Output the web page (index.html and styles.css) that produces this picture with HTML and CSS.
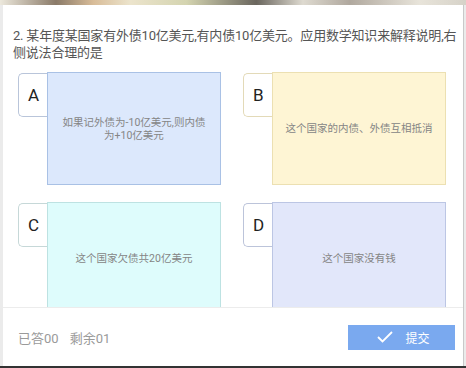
FILE: index.html
```html
<!DOCTYPE html>
<html lang="zh">
<head>
  <meta charset="UTF-8" />
  <meta name="viewport" content="width=device-width, initial-scale=1.0"/>
  <title>答题</title>
  <link rel="stylesheet" href="styles.css">
</head>
<body>
  <div class="screen">
    <div class="photo"></div>

    <div class="panel">
      <div class="content">
        <p class="question">2. 某年度某国家有外债10亿美元,有内债10亿美元。应用数学知识来解释说明,右侧说法合理的是</p>

        <div class="options">
          <div class="option opt-a">
            <div class="letter">A</div>
            <div class="answer">如果记外债为-10亿美元,则内债为+10亿美元</div>
          </div>
          <div class="option opt-b">
            <div class="letter">B</div>
            <div class="answer">这个国家的内债、外债互相抵消</div>
          </div>
          <div class="option opt-c">
            <div class="letter">C</div>
            <div class="answer">这个国家欠债共20亿美元</div>
          </div>
          <div class="option opt-d">
            <div class="letter">D</div>
            <div class="answer">这个国家没有钱</div>
          </div>
        </div>
      </div>

      <div class="footer">
        <div class="stats">
          <span>已答00</span>
          <span>剩余01</span>
        </div>
        <button class="submit">
          <svg width="16" height="12" viewBox="0 0 16 12">
            <polyline points="1,6 5.5,10.5 15,1" fill="none" stroke="#fff" stroke-width="1.8"/>
          </svg>
          提交
        </button>
      </div>
    </div>

    <div class="edge"></div>
  </div>
</body>
</html>
```

FILE: styles.css
```css
body {
  margin: 0;
  background-color: #ebebeb;
  font-family: Roboto, "Noto Sans CJK SC", sans-serif;
  overflow: hidden;
}

.screen {
  display: flex;
  flex-direction: column;
  height: 368px;
}

.photo {
  height: 5px;
  background: linear-gradient(90deg, #ece8dc 0%, #8a7a68 12%, #d8bc98 20%, #ece4cc 28%, #d4d4b0 40%, #6a665e 55%, #dedad0 65%, #b0a89e 75%, #e8e4da 90%, #d6d2c8 100%);
}

.panel {
  flex: 1;
  display: flex;
  flex-direction: column;
  margin-left: 3px;
  width: 460px;
  background-color: white;
  border-right: 1px solid #c9c9c9;
  overflow: hidden;
}

.content {
  flex: 1;
  overflow: hidden;
}

.question {
  margin: 0;
  padding: 22px 0 0 10px;
  font-size: 13px;
  line-height: 17px;
  letter-spacing: -0.2px;
  color: #555;
}

.options {
  display: grid;
  grid-template-columns: 203px 203px;
  column-gap: 22px;
  row-gap: 17px;
  padding: 11px 0 0 15px;
}

.option {
  display: flex;
  height: 113px;
}

.letter {
  width: 29px;
  height: 44px;
  margin-top: 1px;
  padding: 0 0 0 9px;
  box-sizing: border-box;
  border: 1px solid #b9c5da;
  border-right: none;
  border-radius: 5px 0 0 5px;
  background: white;
  font-family: Roboto, Arial, sans-serif;
  font-size: 17px;
  line-height: 42px;
  color: #222;
}

.answer {
  flex: 1;
  display: flex;
  align-items: center;
  justify-content: center;
  padding: 0 10px;
  border: 1px solid;
  text-align: center;
  font-size: 10.5px;
  line-height: 13px;
  color: #858585;
}

.opt-a .answer { background: #dce8fc; border-color: #a9c1e5; }
.opt-b .answer { background: #fef5d4; border-color: #ece0b2; }
.opt-c .answer { background: #defcfc; border-color: #bde2e2; }
.opt-d .answer { background: #e2e7fa; border-color: #bcc6e4; }

.opt-b .letter { border-color: #e3dab8; }
.opt-c .letter { border-color: #c6d8d8; }
.opt-d .letter { border-color: #bcc4da; }

.footer {
  height: 58px;
  display: flex;
  align-items: center;
  justify-content: space-between;
  padding: 0 8px 0 15px;
  border-top: 1px solid #ececec;
}

.stats {
  display: flex;
  gap: 11px;
  font-size: 13px;
  color: #9a9a9a;
}

.submit {
  width: 107px;
  height: 25px;
  display: flex;
  align-items: center;
  justify-content: center;
  gap: 12px;
  border: none;
  background-color: #7aa9ef;
  color: white;
  font-family: Roboto, "Noto Sans CJK SC", sans-serif;
  font-size: 12px;
  padding: 0 0 0 4px;
}

.edge {
  height: 2px;
  background-color: #333;
}
```
